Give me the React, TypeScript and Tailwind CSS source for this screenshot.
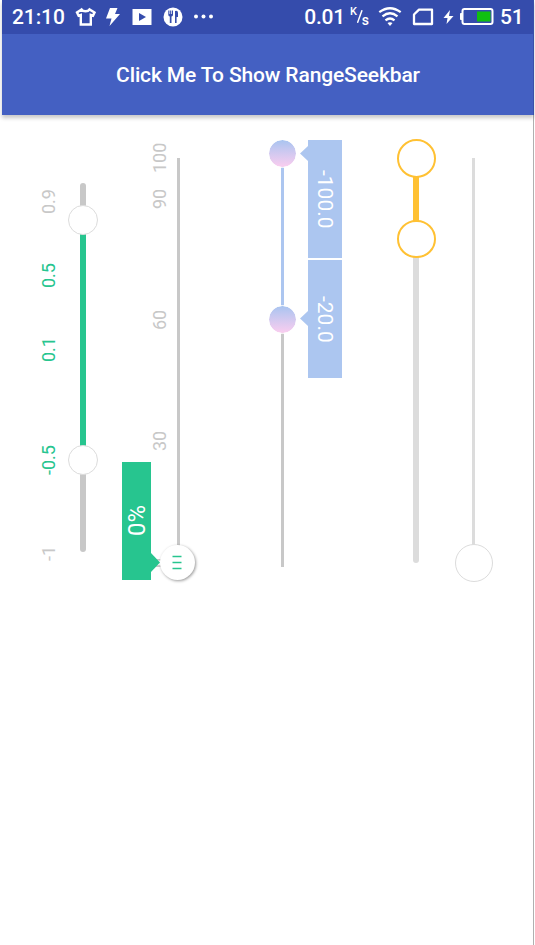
import type { ReactNode } from "react";

function Label({ children, className }: { children: ReactNode; className: string }) {
  return (
    <div
      className={`flex h-[30px] w-[18px] rotate-180 items-center justify-center text-[18px] leading-[18px] whitespace-nowrap [writing-mode:vertical-rl] ${className}`}
    >
      {children}
    </div>
  );
}

function StatusBar() {
  return (
    <div className="flex h-[34px] items-center justify-between bg-[#354cac] pr-[10px] pl-[10px] text-[21px] font-medium text-white">
      <div className="flex items-center">
        <span className="w-[53px] pt-px tracking-[-0.1px]">21:10</span>
        <svg className="ml-[9.500px]" width="21" height="20" viewBox="0 0 21 20" fill="none" stroke="white" strokeWidth="2.4">
          <path d="M6.500 2.500 2 5.500l1.600 3.200 2.200-.8V17.500h10V7.900l2.200.8L19.500 5.500 14.500 2.500c-1.500 2.400-6.500 2.400-8 0Z" />
        </svg>
        <svg className="ml-[9.500px]" width="16" height="20" viewBox="0 0 16 20" fill="white">
          <path d="M5 1h7.500L10 7h5L4.500 19 6.500 11.500H1Z" />
        </svg>
        <svg className="ml-[10.500px]" width="20" height="18" viewBox="0 0 20 18">
          <path d="M.500 1h19v16H.500Z" fill="white" />
          <path d="M7 5v8l7-4Z" fill="#354cac" />
        </svg>
        <svg className="ml-[11px]" width="20" height="20" viewBox="0 0 20 20">
          <circle cx="10" cy="10" r="9.500" fill="white" />
          <path d="M5.300 3.500v4.300q0 1.500 1.500 1.800V16h1.700V9.600Q10 9.300 10 7.800V3.500M7.650 3.500V8M12 16V4q3-1 3 2v4h-1.400v6Z" fill="#354cac" />
          <path d="M6.700 3v4M8.500 3v4" stroke="white" strokeWidth=".7" />
        </svg>
        <svg className="ml-[10px]" width="21" height="6" viewBox="0 0 21 6" fill="white">
          <circle cx="3" cy="2.500" r="2" />
          <circle cx="10.500" cy="2.500" r="2" />
          <circle cx="18" cy="2.500" r="2" />
        </svg>
      </div>
      <div className="flex items-center">
        <span className="pt-px tracking-[-0.2px]">0.01</span>
        <span className="ml-[5px] flex h-[20px] w-[19px] text-[11px] leading-[10px]">
          <span className="w-[7px]">K</span>
          <svg className="mt-[3px]" width="6" height="13" viewBox="0 0 6 13" stroke="white" strokeWidth="1.500">
            <path d="M5.200 0 .500 13" />
          </svg>
          <span className="-ml-px mt-[8px] text-[14px]">s</span>
        </span>
        <svg className="ml-[9px]" width="24" height="20" viewBox="0 0 24 20" fill="none" stroke="white" strokeWidth="2.300">
          <path d="M1.300 5.200Q12-2.800 22.700 5.200M4.500 9.300Q12 3.300 19.500 9.300M7.500 13.300Q12 9.700 16.500 13.300" />
          <path d="M9.500 16Q12 14.300 14.500 16L12 19Z" fill="white" stroke="none" />
        </svg>
        <svg className="ml-[10px]" width="22" height="18" viewBox="0 0 22 18" fill="none" stroke="white" strokeWidth="2.300">
          <path d="M7 1.700h13v14.300H2V6.500Z" strokeLinejoin="round" />
        </svg>
        <svg className="ml-[9px]" width="11" height="16" viewBox="0 0 11 16" fill="white">
          <path d="M7 1 .500 9H4.500L3.500 15 10.500 7H6Z" />
        </svg>
        <svg className="ml-[5px]" width="35" height="18" viewBox="0 0 35 18">
          <rect x="3.500" y="1" width="30" height="15" rx="2" fill="none" stroke="white" strokeWidth="2" />
          <path d="M3 5.500H1.500v6H3Z" fill="white" stroke="white" />
          <rect x="18" y="3.500" width="13.500" height="10" fill="#10c010" />
        </svg>
        <span className="ml-[6px] w-[23px] pt-px tracking-[-0.3px] whitespace-nowrap">51</span>
      </div>
    </div>
  );
}

export default function App() {
  return (
    <div className="h-[945px] w-[535px] overflow-hidden bg-white pr-px pl-[2px] font-['Roboto',sans-serif]">
      <div className="h-full border-r border-[#b0b0b0]">
        <header className="-mr-px border-r border-[#3a50a8] shadow-[0_3px_4px_rgba(0,0,0,0.22)]">
          <StatusBar />
          <button className="flex h-[81px] w-full items-center justify-center bg-[#4460c2] pt-[2px] pl-px text-[21px] font-medium tracking-[-0.13px] whitespace-nowrap text-white">
            Click Me To Show RangeSeekbar
          </button>
        </header>

        <main className="flex items-start">
          {/* Stepped range */}
          <div className="ml-[38px] flex w-[18px] flex-col pt-[72px] text-[#27c58f]">
            <Label className="text-[#c8c8c8]">0.9</Label>
            <Label className="mt-[44px]">0.5</Label>
            <Label className="mt-[44px]">0.1</Label>
            <Label className="mt-[80px]">-0.5</Label>
            <Label className="mt-[63px] text-[#c8c8c8]">-1</Label>
          </div>
          <div className="relative mt-[68px] ml-[22px] h-[369px] w-[6px] rounded-[3px] bg-[#c8c8c8]">
            <div className="absolute top-[37px] h-[240px] w-full bg-[#27c58f]" />
            <div className="absolute top-[22px] -left-[12px] size-[30px] rounded-full border border-[#dcdcdc] bg-white" />
            <div className="absolute top-[262px] -left-[12px] size-[30px] rounded-full border border-[#dcdcdc] bg-white" />
          </div>

          {/* Single value with percent indicator */}
          <div className="ml-[65px] flex w-[18px] flex-col pt-[28px] text-[#c8c8c8]">
            <Label className="">100</Label>
            <Label className="mt-[10.500px]">90</Label>
            <Label className="mt-[91.500px]">60</Label>
            <Label className="mt-[91px]">30</Label>
            <Label className="mt-[92px]">0</Label>
          </div>
          <div className="relative mt-[43px] ml-[8px] h-[405px] w-[3px] bg-[#c8c8c8]">
            <div className="absolute top-[387px] -left-[17px] size-[35px] rounded-full bg-white shadow-[1px_1px_3px_rgba(0,0,0,0.4)]">
              <svg className="mt-[10px] ml-[12px]" width="10" height="15" viewBox="0 0 10 15" stroke="#27c58f" strokeWidth="1.400">
                <path d="M.500 1.500h9M.500 7.500h9M.500 13.500h9" />
              </svg>
            </div>
            <div className="absolute top-[304px] -left-[55.500px] flex h-[118px] w-[29.500px] items-center justify-center bg-[#27c58f]">
              <span className="ml-[2px] rotate-180 text-[24px] leading-[29px] text-white [writing-mode:vertical-rl]">0%</span>
              <i className="absolute top-[91px] left-full h-[19px] w-[9px] bg-[#27c58f] [clip-path:polygon(0_0,100%_50%,0_100%)]" />
            </div>
          </div>

          {/* Gradient thumbs */}
          <div className="relative mt-[39px] ml-[101px] h-[413px] w-[3px] bg-[#c8c8c8]">
            <div className="absolute top-0 h-[165px] w-full bg-[#acc6f0]" />
            <div className="absolute -top-[15px] -left-[13px] size-[29px] rounded-full border border-white bg-gradient-to-b from-[#a8c4f0] to-[#facdef] bg-clip-padding" />
            <div className="absolute top-[150.500px] -left-[13px] size-[29px] rounded-full border border-white bg-gradient-to-b from-[#a8c4f0] to-[#facdef] bg-clip-padding" />
          </div>
          <div className="mt-[25px] ml-[24px] flex w-[34px] flex-col gap-[2px] text-[21px] leading-[34px] text-white">
            <div className="relative flex h-[118px] items-center justify-center bg-[#acc6f0]">
              <i className="absolute top-[6px] right-full h-[15px] w-[8px] bg-[#acc6f0] [clip-path:polygon(100%_0,0_50%,100%_100%)]" />
              <span className="[writing-mode:vertical-rl]">-100.0</span>
            </div>
            <div className="relative flex h-[118px] items-center justify-center bg-[#acc6f0]">
              <i className="absolute top-[51px] right-full h-[15px] w-[8px] bg-[#acc6f0] [clip-path:polygon(100%_0,0_50%,100%_100%)]" />
              <span className="[writing-mode:vertical-rl]">-20.0</span>
            </div>
          </div>

          {/* Outlined range */}
          <div className="relative mt-[43px] ml-[71px] h-[405px] w-[6px] rounded-[3px] bg-[#dcdcdc]">
            <div className="absolute top-0 h-[80px] w-full bg-[#ffc133]" />
            <div className="absolute -top-[19px] -left-[16px] size-[38.500px] rounded-full border-2 border-[#ffc133] bg-white" />
            <div className="absolute top-[61.500px] -left-[16px] size-[38.500px] rounded-full border-2 border-[#ffc133] bg-white" />
          </div>

          {/* Plain single value */}
          <div className="relative mt-[43px] ml-[53px] h-[405px] w-[3px] bg-[#dcdcdc]">
            <div className="absolute top-[385.500px] -left-[17.500px] size-[38.500px] rounded-full border border-[#dcdcdc] bg-white" />
          </div>
        </main>
      </div>
    </div>
  );
}
